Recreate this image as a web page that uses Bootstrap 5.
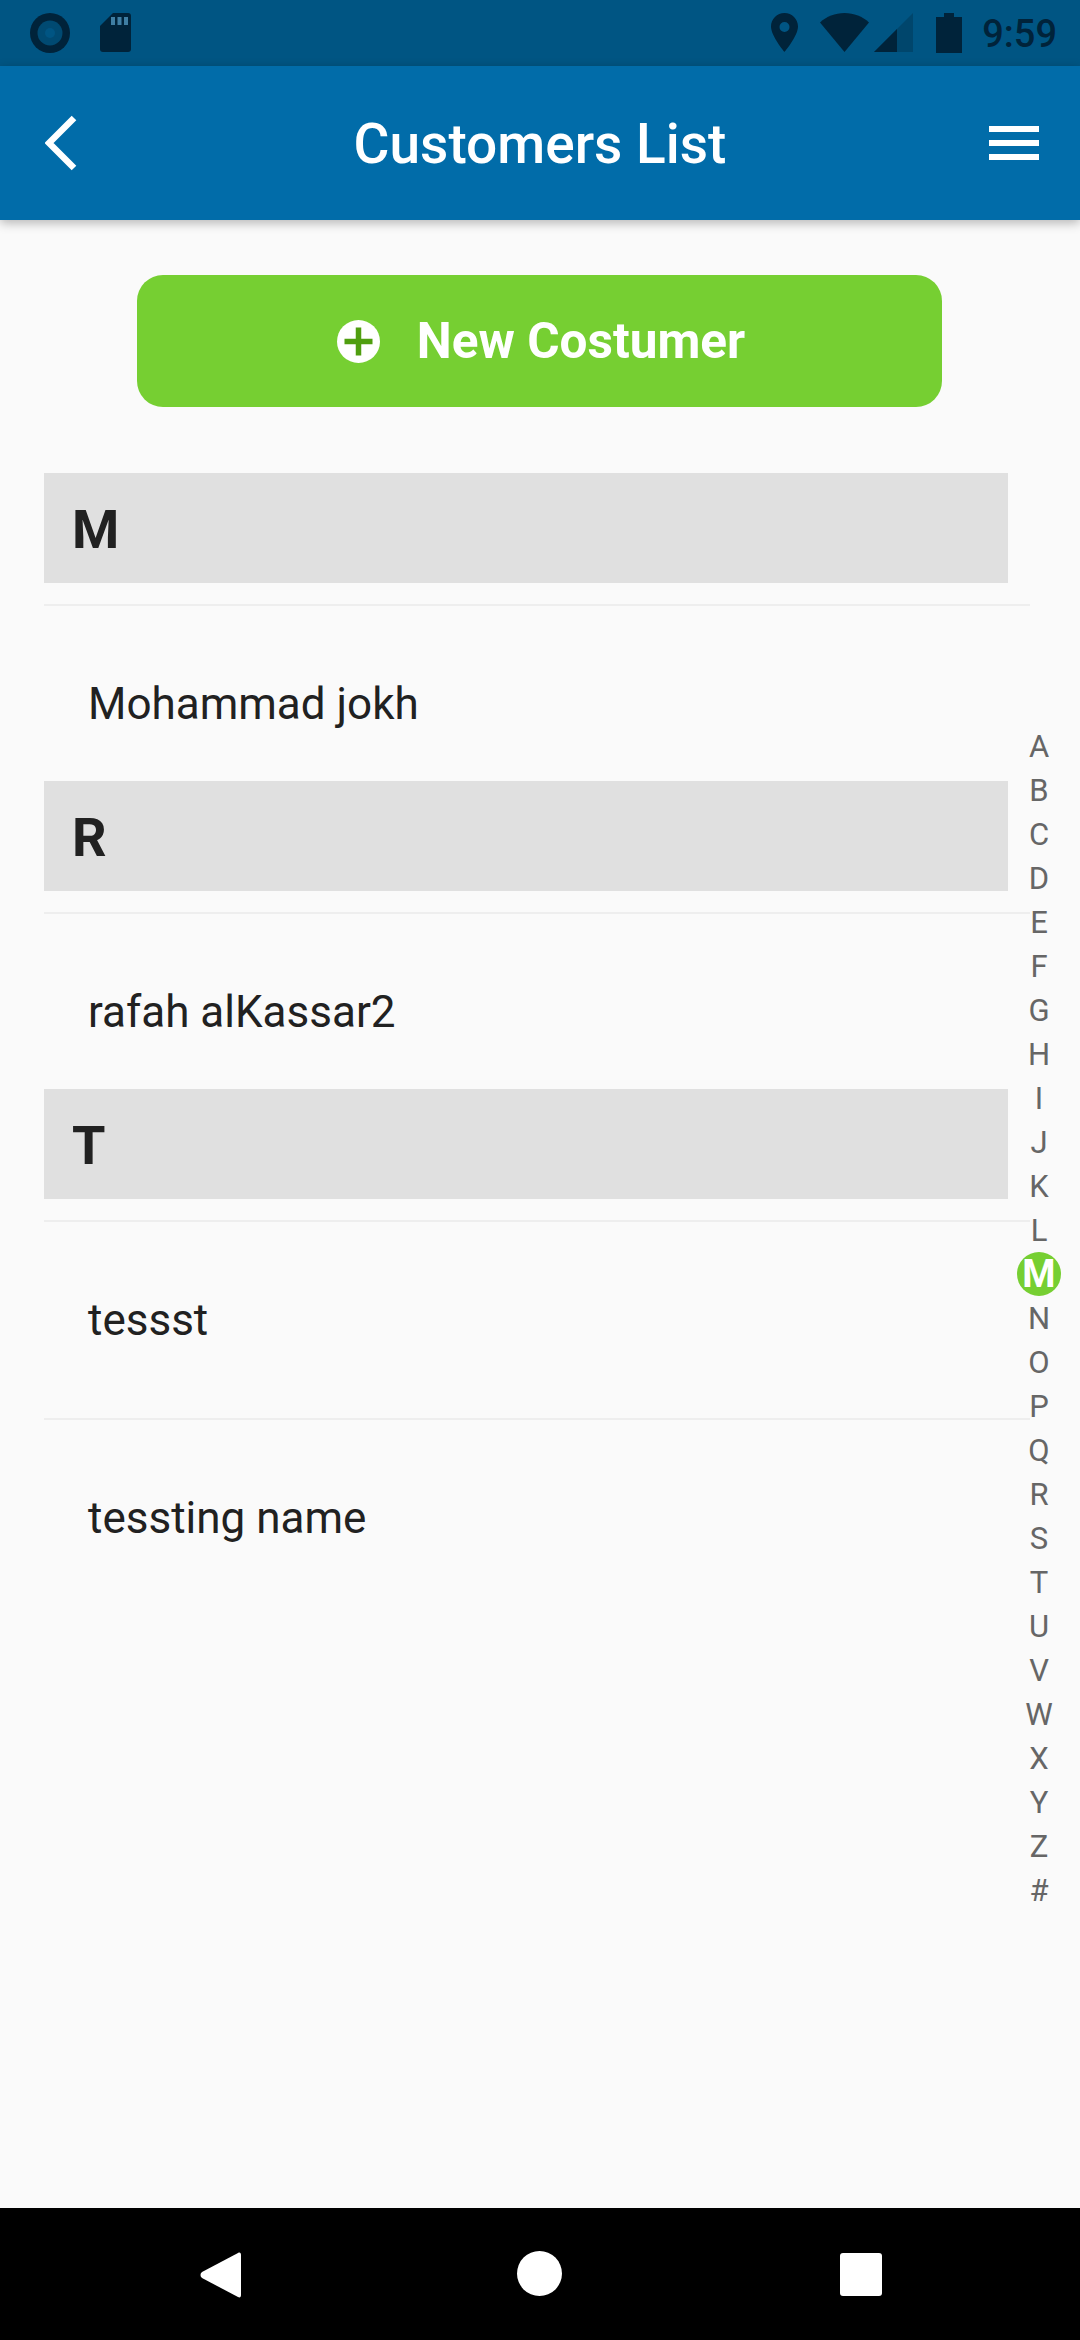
<!DOCTYPE html>
<html lang="en">
<head>
<meta charset="utf-8">
<title>Customers List</title>
<link href="https://cdn.jsdelivr.net/npm/bootstrap@5.3.0/dist/css/bootstrap.min.css" rel="stylesheet">
<style>
html,body{margin:0;height:2340px;overflow:hidden}
body{font-family:Roboto,"Liberation Sans",sans-serif;background:#fafafa;color:#212121;width:1080px}
.screen{height:2340px;position:relative}
.stat-bar{height:66px;background:#005583;color:#00233a;padding:13px 23px 0 30px}
.stat-bar svg{display:block;fill:#00233a}
.stat-icons-l{gap:30px}
.stat-wifi{margin-left:22px}
.stat-sig{margin-left:5px}
.stat-bat{margin-left:23px}
.stat-time{font-size:38px;font-weight:500;line-height:42px;margin-left:20px;color:#00233a}
.app-bar{height:154px;background:#016ca9;color:#fff;box-shadow:0 3px 10px rgba(0,0,0,.28);padding:0 41px 0 45px;position:relative;z-index:2}
.app-title{font-size:55px;font-weight:500;position:absolute;left:0;right:0;text-align:center;line-height:62px;top:47px;margin:0}
.content-area{padding-top:55px}
.new-btn{width:805px;height:132px;margin-left:137px;background:#76cf32;border:0;border-radius:26px;color:#fff;font-size:49.500px;font-weight:700;gap:37px;padding:0 0 0 3px}
.new-btn:hover{background:#76cf32;color:#fff}
.cust-list{margin-top:66px;padding-left:44px;width:1030px}
.sec-head{height:110px;width:964px;background:#e0e0e0;font-size:54px;font-weight:700;line-height:114px;padding-left:28px;color:#212121;margin-bottom:21px}
.cust-group{margin-bottom:-21px}
.list-group-flush>.list-group-item.cust-item{height:198px;background:transparent;border:0;border-top:2px solid #eeeeee;border-radius:0;font-size:44px;line-height:50px;color:#212121;padding:73px 0 0 44px}
.alpha-index{position:absolute;left:1017px;top:724px;width:44px;color:#666;font-size:31px;text-align:center;z-index:3}
.alpha-index span{display:block;height:44px;line-height:46px}
.alpha-index .alpha-on{background:#76cf32;color:#fff;font-weight:700;border-radius:50%;font-size:38px;line-height:44px}
.sys-nav{position:absolute;left:0;right:0;top:2208px;height:132px;background:#000}
.sys-nav svg{position:absolute;fill:#fff}
.nav-back{left:200px;top:44px}
.nav-home{left:517px;top:43px}
.nav-recent{left:840px;top:45px}
</style>
</head>
<body>
<div class="screen d-flex flex-column">
  <div class="stat-bar d-flex justify-content-between">
    <div class="d-flex stat-icons-l">
      <svg width="40" height="40" viewBox="0 0 40 40"><circle cx="20" cy="20" r="20"/><circle cx="20" cy="20" r="12.500" fill="#004a72"/><circle cx="20" cy="20" r="5" fill="#005583"/></svg>
      <svg width="31" height="39" viewBox="0 0 31 39"><path d="M13 0h15a3 3 0 0 1 3 3v33a3 3 0 0 1-3 3H3a3 3 0 0 1-3-3V13z"/><path fill="#3f7ea3" d="M11 4h4v8h-4zM17.500 4h4v8h-4zM24 4h4v8h-4z"/></svg>
    </div>
    <div class="d-flex">
      <svg width="27" height="39" viewBox="0 0 27 39"><path fill-rule="evenodd" d="M13.500 0C6 0 0 6 0 13.500 0 23 13.500 39 13.500 39S27 23 27 13.500C27 6 21 0 13.500 0zm0 9a5 5 0 1 1 0 10 5 5 0 0 1 0-10z"/></svg>
      <svg class="stat-wifi" width="49" height="39" viewBox="0 0 49 39"><path d="M24.500 39L0 9.500C6.500 3.500 15 0 24.500 0S42.500 3.500 49 9.500z"/></svg>
      <svg class="stat-sig" width="39" height="39" viewBox="0 0 39 39"><path fill="#00466c" d="M39 0v39H0z"/><path d="M23 16v23H0z"/></svg>
      <svg class="stat-bat" width="26" height="40" viewBox="0 0 26 40"><path d="M8 0h10v4h8v36H0V4h8z"/></svg>
      <span class="stat-time">9:59</span>
    </div>
  </div>
  <header class="app-bar d-flex align-items-center justify-content-between">
    <svg width="32" height="56" viewBox="0 0 32 56"><path d="M29 3L4 28l25 25" fill="none" stroke="#fff" stroke-width="6.500"/></svg>
    <h1 class="app-title">Customers List</h1>
    <svg width="50" height="34" viewBox="0 0 50 34"><path fill="#fff" d="M0 0h50v6H0zM0 14h50v6H0zM0 28h50v6H0z"/></svg>
  </header>
  <main class="content-area flex-grow-1">
    <button type="button" class="btn new-btn d-flex align-items-center justify-content-center">
      <svg width="43" height="43" viewBox="0 0 43 43"><circle cx="21.500" cy="21.500" r="21.500" fill="#fff"/><path fill="#4f9e0f" d="M18.750 7.500h5.500v11.250h11.250v5.500h-11.250v11.250h-5.500v-11.250h-11.250v-5.500h11.250z"/></svg>
      <span>New Costumer</span>
    </button>
    <div class="cust-list">
      <section class="cust-group">
        <div class="sec-head">M</div>
        <ul class="list-group list-group-flush"><li class="list-group-item cust-item">Mohammad jokh</li></ul>
      </section>
      <section class="cust-group">
        <div class="sec-head">R</div>
        <ul class="list-group list-group-flush"><li class="list-group-item cust-item">rafah alKassar2</li></ul>
      </section>
      <section class="cust-group">
        <div class="sec-head">T</div>
        <ul class="list-group list-group-flush"><li class="list-group-item cust-item">tessst</li><li class="list-group-item cust-item">tessting name</li></ul>
      </section>
    </div>
  </main>
  <div class="alpha-index">
    <span>A</span><span>B</span><span>C</span><span>D</span><span>E</span><span>F</span><span>G</span><span>H</span><span>I</span><span>J</span><span>K</span><span>L</span><span class="alpha-on">M</span><span>N</span><span>O</span><span>P</span><span>Q</span><span>R</span><span>S</span><span>T</span><span>U</span><span>V</span><span>W</span><span>X</span><span>Y</span><span>Z</span><span>#</span>
  </div>
  <nav class="sys-nav">
    <svg class="nav-back" width="41" height="46" viewBox="0 0 41 46"><path d="M38 1c2-1 3 0 3 2v40c0 2-1 3-3 2L2 26c-2-1.500-2-4.500 0-6z"/></svg>
    <svg class="nav-home" width="45" height="45" viewBox="0 0 45 45"><circle cx="22.500" cy="22.500" r="22.500"/></svg>
    <svg class="nav-recent" width="42" height="43" viewBox="0 0 42 43"><rect width="42" height="43" rx="3"/></svg>
  </nav>
</div>
<script src="https://cdn.jsdelivr.net/npm/bootstrap@5.3.0/dist/js/bootstrap.bundle.min.js"></script>
</body>
</html>
